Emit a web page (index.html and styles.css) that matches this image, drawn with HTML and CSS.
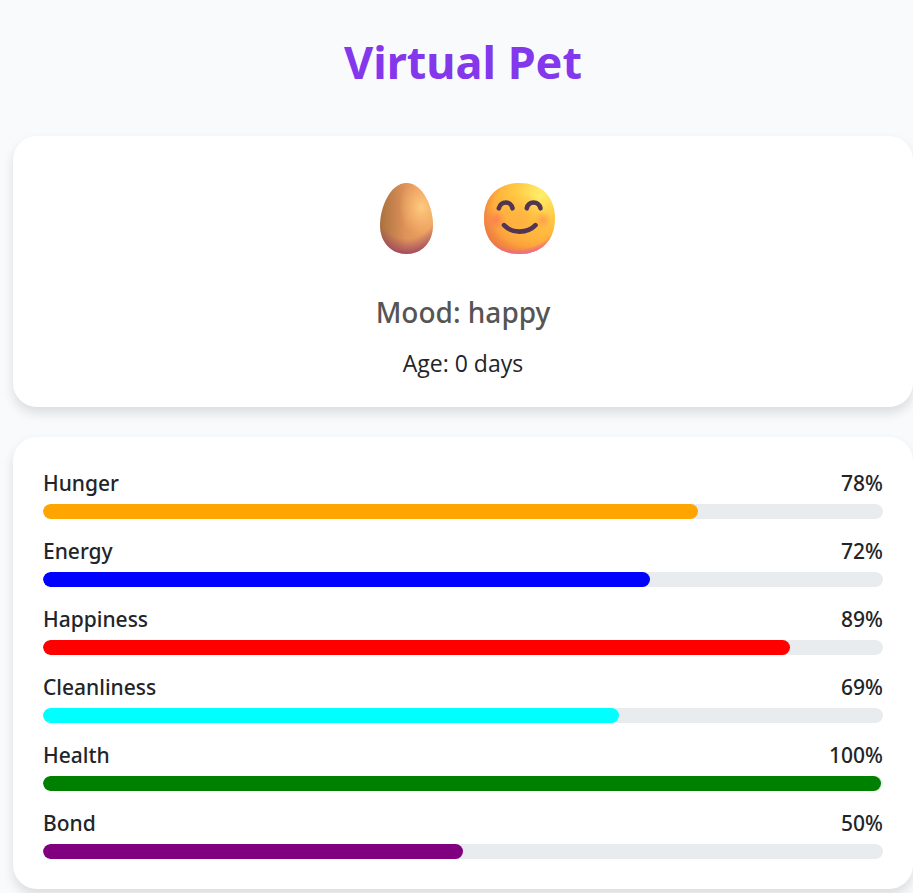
FILE: index.html
```html
<!DOCTYPE html>
<html lang="en">
<head>
<meta charset="utf-8">
<meta name="viewport" content="width=device-width, initial-scale=1">
<title>Virtual Pet</title>
<link rel="stylesheet" href="styles.css">
</head>
<body>
<main class="page">
  <h1 class="title">Virtual Pet</h1>

  <section class="card pet">
    <div class="faces">
      <svg class="face" viewBox="0 0 72 72" role="img" aria-label="Egg">
        <defs>
          <path id="egg" d="M35.500 1C19 1 9 26 9 43C9 61 21 72 35.500 72S62 61 62 43C62 26 52 1 35.500 1Z"/>
          <linearGradient id="shell" x1="0" y1="0" x2="1" y2="0">
            <stop offset="0" stop-color="#a8723f"/>
            <stop offset=".25" stop-color="#c6824d"/>
            <stop offset=".5" stop-color="#e0945b"/>
            <stop offset="1" stop-color="#eda260"/>
          </linearGradient>
          <radialGradient id="shine" cx=".78" cy=".34" r=".42">
            <stop offset="0" stop-color="#ffcb80"/>
            <stop offset="1" stop-color="#ffc070" stop-opacity="0"/>
          </radialGradient>
          <radialGradient id="base" cx=".5" cy=".1" r=".9">
            <stop offset=".76" stop-color="#a04a60" stop-opacity="0"/>
            <stop offset="1" stop-color="#9e4860" stop-opacity=".95"/>
          </radialGradient>
        </defs>
        <use href="#egg" fill="url(#shell)"/>
        <use href="#egg" fill="url(#shine)"/>
        <use href="#egg" fill="url(#base)"/>
      </svg>
      <svg class="face" viewBox="0 0 72 72" role="img" aria-label="Smiling face">
        <defs>
          <path id="head" d="M35.500 1C57 1 71 14.500 71 36.500S57 72 35.500 72S0 58.500 0 36.500S14 1 35.500 1Z"/>
          <radialGradient id="skin" cx=".8" cy=".16" r=".95">
            <stop offset="0" stop-color="#fff06b"/>
            <stop offset=".38" stop-color="#ffc943"/>
            <stop offset=".7" stop-color="#ffb03b"/>
            <stop offset="1" stop-color="#f6883f"/>
          </radialGradient>
          <radialGradient id="glow" cx=".5" cy=".52" r=".4">
            <stop offset="0" stop-color="#ffad40" stop-opacity=".8"/>
            <stop offset="1" stop-color="#ffad40" stop-opacity="0"/>
          </radialGradient>
          <radialGradient id="edge" cx=".58" cy=".42" r=".62">
            <stop offset=".74" stop-color="#e57840" stop-opacity="0"/>
            <stop offset="1" stop-color="#e57548" stop-opacity=".6"/>
          </radialGradient>
          <radialGradient id="chin" cx=".47" cy=".24" r=".78">
            <stop offset=".88" stop-color="#ef5f91" stop-opacity="0"/>
            <stop offset=".98" stop-color="#ee63a3" stop-opacity=".9"/>
          </radialGradient>
          <radialGradient id="blush">
            <stop offset="0" stop-color="#ff6860" stop-opacity=".65"/>
            <stop offset="1" stop-color="#ff7860" stop-opacity="0"/>
          </radialGradient>
        </defs>
        <use href="#head" fill="url(#skin)"/>
        <use href="#head" fill="url(#glow)"/>
        <use href="#head" fill="url(#edge)"/>
        <use href="#head" fill="url(#chin)"/>
        <circle cx="12" cy="38" r="11" fill="url(#blush)"/>
        <circle cx="59" cy="38" r="9" fill="url(#blush)" opacity=".65"/>
        <g fill="none" stroke="#523550" stroke-width="4.600" stroke-linecap="round">
          <path d="M14.800 26.300C17 18.500 27 18.500 28.500 26.300"/>
          <path d="M42.800 26.300C44.500 18.500 54.500 18.500 56.500 26.300"/>
          <path d="M20 43.200C28 51.700 43.500 51.700 51.500 43.200"/>
        </g>
      </svg>
    </div>
    <p class="mood">Mood: happy</p>
    <p class="age">Age: 0 days</p>
  </section>

  <section class="card stats">
    <div class="stat">
      <div class="stat-head"><span>Hunger</span><span>78%</span></div>
      <div class="track"><div class="fill hunger" style="width:78%"></div></div>
    </div>
    <div class="stat">
      <div class="stat-head"><span>Energy</span><span>72%</span></div>
      <div class="track"><div class="fill energy" style="width:72.300%"></div></div>
    </div>
    <div class="stat">
      <div class="stat-head"><span>Happiness</span><span>89%</span></div>
      <div class="track"><div class="fill happiness" style="width:88.900%"></div></div>
    </div>
    <div class="stat">
      <div class="stat-head"><span>Cleanliness</span><span>69%</span></div>
      <div class="track"><div class="fill cleanliness" style="width:68.600%"></div></div>
    </div>
    <div class="stat">
      <div class="stat-head"><span>Health</span><span>100%</span></div>
      <div class="track"><div class="fill health" style="width:99.800%"></div></div>
    </div>
    <div class="stat">
      <div class="stat-head"><span>Bond</span><span>50%</span></div>
      <div class="track"><div class="fill bond" style="width:50%"></div></div>
    </div>
  </section>
</main>
</body>
</html>
```

FILE: styles.css
```css
* { box-sizing: border-box; }

body {
  margin: 0;
  background: #f8fafc;
  color: #212529;
  font-family: "Segoe UI", "Noto Sans", "Open Sans", sans-serif;
}

h1, p { margin: 0; }

.page {
  display: flex;
  flex-direction: column;
  gap: 30px;
  padding: 30px 0 4px 13px;
}

.title {
  margin-bottom: 12px;
  color: #8338ec;
  font-size: 45px;
  font-weight: 700;
  line-height: 64px;
  text-align: center;
}

.card {
  padding: 30px;
  border-radius: 24px;
  background: #fff;
  box-shadow: 0 6px 12px rgba(0, 0, 0, 0.12);
}

.pet {
  display: flex;
  flex-direction: column;
  align-items: center;
  padding: 46px 30px 26px;
}

.faces {
  display: flex;
  gap: 41px;
  margin-bottom: 38px;
}

.face {
  display: block;
  width: 72px;
  height: 72px;
}

.mood {
  margin-bottom: 14px;
  color: #555;
  font-size: 28px;
  font-weight: 500;
  line-height: 40px;
}

.age {
  font-family: "Segoe UI", "Open Sans", "Noto Sans", sans-serif;
  font-size: 23px;
  line-height: 35px;
}

.stats {
  display: flex;
  flex-direction: column;
  gap: 17px;
  padding-top: 31px;
}

.stat-head {
  display: flex;
  justify-content: space-between;
  margin-bottom: 5px;
  font-size: 21px;
  font-weight: 500;
  line-height: 31px;
}

.track {
  height: 15px;
  border-radius: 8px;
  background: #e9ecef;
  overflow: hidden;
}

.fill {
  height: 100%;
  border-radius: 8px;
}

.hunger { background: orange; }
.energy { background: blue; }
.happiness { background: red; }
.cleanliness { background: cyan; }
.health { background: green; }
.bond { background: purple; }
```
